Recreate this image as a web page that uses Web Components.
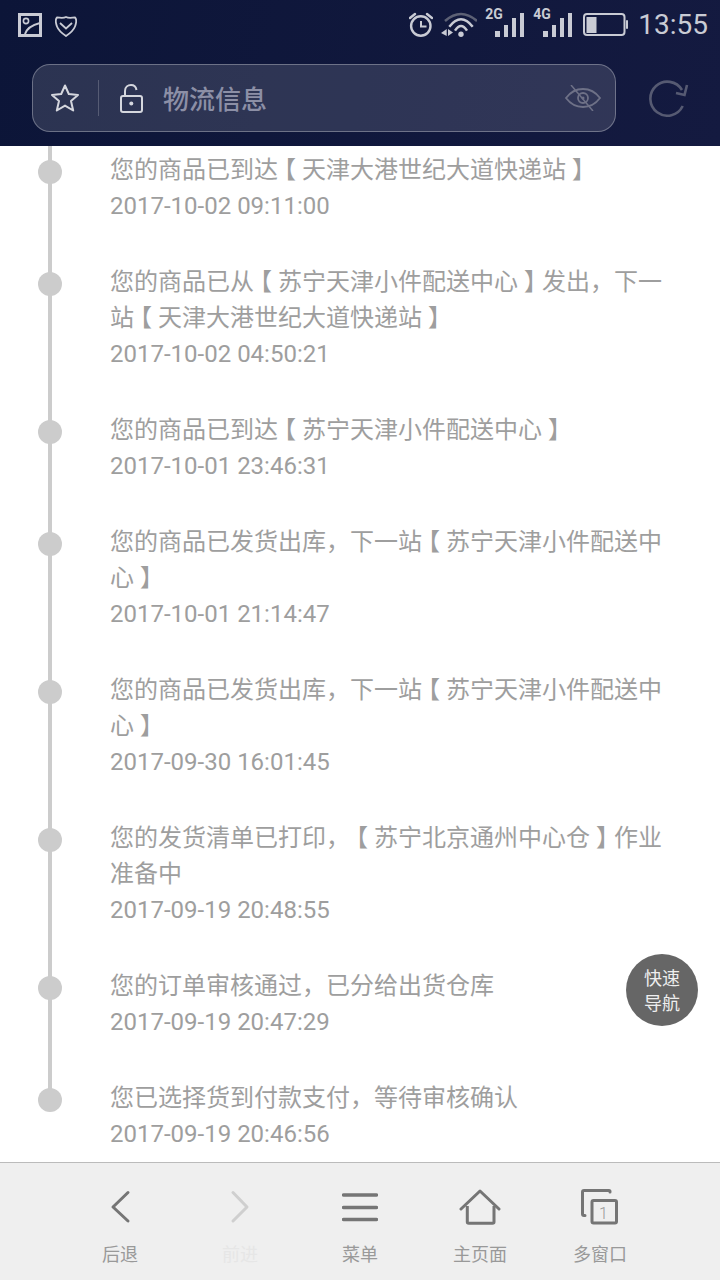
<!DOCTYPE html>
<html lang="zh-CN"><head><meta charset="utf-8">
<style>
html,body{margin:0;padding:0;height:1280px;overflow:hidden;background:#fff}
body{display:flex;flex-direction:column;font-family:"Noto Sans CJK SC",sans-serif;}
</style></head><body>
<app-header></app-header>
<track-list>
<track-item time="2017-10-02 09:11:00">您的商品已到达<l-k>【</l-k>天津大港世纪大道快递站<r-k>】</r-k></track-item>
<track-item time="2017-10-02 04:50:21">您的商品已从<l-k>【</l-k>苏宁天津小件配送中心<r-k>】</r-k>发出，下一<br>站<l-k>【</l-k>天津大港世纪大道快递站<r-k>】</r-k></track-item>
<track-item time="2017-10-01 23:46:31">您的商品已到达<l-k>【</l-k>苏宁天津小件配送中心<r-k>】</r-k></track-item>
<track-item time="2017-10-01 21:14:47">您的商品已发货出库，下一站<l-k>【</l-k>苏宁天津小件配送中<br>心<r-k>】</r-k></track-item>
<track-item time="2017-09-30 16:01:45">您的商品已发货出库，下一站<l-k>【</l-k>苏宁天津小件配送中<br>心<r-k>】</r-k></track-item>
<track-item time="2017-09-19 20:48:55">您的发货清单已打印，<l-k>【</l-k>苏宁北京通州中心仓<r-k>】</r-k>作业<br>准备中</track-item>
<track-item time="2017-09-19 20:47:29">您的订单审核通过，已分给出货仓库</track-item>
<track-item time="2017-09-19 20:46:56" last>您已选择货到付款支付，等待审核确认</track-item>
<quick-nav></quick-nav>
</track-list>
<bottom-bar></bottom-bar>
<script>
const def=(name,html,init)=>customElements.define(name,class extends HTMLElement{
  constructor(){super();this.attachShadow({mode:'open'}).innerHTML=html;}
  connectedCallback(){init&&init(this)}
});
const I=(w,h,vb,body,extra='')=>`<svg width="${w}" height="${h}" viewBox="${vb}" fill="none" ${extra}>${body}</svg>`;
const C='#c9cbd4';
const sig=`<rect x="0" y="18" width="5" height="6" fill="${C}"/><rect x="9" y="12" width="4" height="12" fill="${C}"/><rect x="17" y="5" width="4" height="19" fill="${C}"/><rect x="25" y="0" width="4" height="24" fill="${C}"/>`;
def('l-k',`<style>:host{display:inline-block;font-feature-settings:"halt";padding:0 6px}</style><slot></slot>`);
def('r-k',`<style>:host{display:inline-block;font-feature-settings:"halt";padding:0 6px}</style><slot></slot>`);
def('app-header',`<style>
:host{display:block;height:146px;flex:none;background:linear-gradient(100deg,#0c1538,#141a40);box-sizing:border-box;color:${C}}
svg{display:block}
.status{height:50px;display:flex;align-items:flex-start}
.left{display:flex;align-items:center;gap:13px;margin:13px 0 0 18px}
.right{display:flex;align-items:flex-start;margin-left:auto;margin-right:12px}
.time{font:28px/50px Roboto,sans-serif;color:${C};margin-left:10px}
.net{position:relative;width:39px;height:31px;margin-top:6px}
.net b{position:absolute;left:0;top:0;font:bold 14px/16px Roboto,sans-serif;color:${C}}
.net svg{position:absolute;right:0;bottom:0}
.bar{margin:14px 0 0 32px;display:flex;align-items:center}
.addr{width:584px;height:68px;box-sizing:border-box;border:1px solid rgba(255,255,255,.3);border-radius:18px;background:rgba(255,255,255,.13);display:flex;align-items:center;}
.title{font-size:26px;line-height:68px;color:#8c8fa6;font-weight:500;margin-left:19px}
.div{width:1px;height:36px;background:rgba(255,255,255,.2);margin:0 19px 0 18px}
</style>
<div class="status">
 <div class="left">
  ${I(24,24,'0 0 24 24',`<rect x="1.5" y="1.5" width="21" height="21" stroke="${C}" stroke-width="3"/><circle cx="8" cy="8" r="2.6" stroke="${C}" stroke-width="1.6"/><path d="M7 21C9 15 14 12 22 10" stroke="${C}" stroke-width="2"/>`)}
  ${I(22,22,'0 0 22 22',`<path d="M11 2C14 3.500 17 2.500 20 2.500C21.500 4 21.300 8 20 11.500C18.500 15.500 14 19 11 21C8 19 3.500 15.500 2 11.500C.7 8 .5 4 2 2.500C5 2.500 8 3.500 11 2Z" stroke="${C}" stroke-width="1.8" stroke-linejoin="round"/><path d="M5 8L11 13.500L17 8" stroke="${C}" stroke-width="1.800"/>`,'style="margin-top:1px"')}
 </div>
 <div class="right">
  ${I(24,26,'0 0 24 26',`<circle cx="11.800" cy="14" r="9.700" stroke="${C}" stroke-width="2.400"/><path d="M12 9V14.500H17.500" stroke="${C}" stroke-width="2"/><path d="M1 6L6 2M23 6L18 2" stroke="${C}" stroke-width="2.400" stroke-linecap="round"/>`,'style="margin:12px 8px 0 0"')}
  ${I(36,26,'0 0 36 26',`<path d="M4 9Q20 -5 36 9" stroke="#5d6175" stroke-width="2.500"/><path d="M8.300 14.700Q20 -.1 31.700 14.700" stroke="${C}" stroke-width="2.500"/><path d="M14 18.700Q20 9.300 26 18.700" stroke="${C}" stroke-width="2.500"/><circle cx="20" cy="22.300" r="2.700" fill="${C}"/><path d="M0 21L5.700 17V24ZM7 17L12 20.500L7 24Z" fill="${C}"/>`,'style="margin:12px 8px 0 0"')}
  <div class="net"><b>2G</b>${I(29,24,'0 0 29 24',sig)}</div>
  <div class="net" style="margin-left:9px"><b>4G</b>${I(29,24,'0 0 29 24',sig)}</div>
  ${I(45,24,'0 0 45 24',`<rect x="1" y="1" width="40.500" height="21" rx="3" stroke="${C}" stroke-width="2"/><rect x="3.500" y="4" width="10" height="16" fill="${C}"/><rect x="43" y="7" width="2" height="9" rx="1" fill="${C}"/>`,'style="margin:13px 0 0 11px"')}
  <span class="time">13:55</span>
 </div>
</div>
<div class="bar">
 <div class="addr">
  ${I(30,30,'0 0 30 30',`<path d="M15 2.500L18.800 11L28 12L21 18L23.200 27.500L15 22.600L6.800 27.500L9 18L2 12L11.200 11Z" stroke="#d5d7de" stroke-width="2" stroke-linejoin="round"/>`,'style="margin-left:17px"')}
  <div class="div"></div>
  ${I(26,30,'0 0 26 30',`<rect x="3" y="13" width="21" height="16" rx="2" stroke="#d5d7de" stroke-width="2"/><path d="M7 13V8C7 4 10 2 13 2C16 2 18 4 18.500 7" stroke="#d5d7de" stroke-width="2"/><circle cx="13.300" cy="20.500" r="2" fill="#d5d7de"/>`)}
  <span class="title">物流信息</span>
  ${I(36,26,'0 0 36 26',`<path d="M1 13C10 1 26 1 35 13C26 25 10 25 1 13Z" stroke="#6e7187" stroke-width="1.800"/><circle cx="18" cy="13" r="5" stroke="#6e7187" stroke-width="1.800"/><circle cx="18" cy="13" r="1.500" fill="#6e7187"/><path d="M6 0L28 26" stroke="#6e7187" stroke-width="1.500"/>`,'style="margin-left:auto;margin-right:14px"')}
 </div>
 ${I(40,38,'0 0 40 38',`<path d="M33 11A17 17 0 1 0 33.700 27" stroke="#565a72" stroke-width="2.600"/><path d="M38 6L35.500 16L27 14" stroke="#565a72" stroke-width="2.600"/>`,'style="margin-left:33px"')}
</div>`);
def('track-list',`<style>
:host{display:block;position:relative;flex:1;min-height:0;overflow:hidden;padding-top:6px;background:#fff}
</style><slot></slot>`);
def('track-item',`<style>
:host{display:flow-root;position:relative;padding:0 50px 40px 110px;color:#9e9e9e;font-size:24px;line-height:36px;text-spacing-trim:space-all}
.rail{position:absolute;left:48px;width:4px;top:-40px;bottom:0;background:#ccc}
:host([last]) .rail{bottom:auto;height:50px}
.dot{position:absolute;left:38px;top:8px;width:24px;height:24px;border-radius:50%;background:#ccc}
.m{margin:-2px 0 2px}
.t{font-family:Roboto,sans-serif}
</style><div class="rail"></div><div class="dot"></div><div class="m"><slot></slot></div><div class="t"></div>`,
 el=>{el.shadowRoot.querySelector('.t').textContent=el.getAttribute('time')});
def('quick-nav',`<style>
:host{position:absolute;left:626px;top:808px;width:72px;height:72px;border-radius:50%;background:#666;color:#eee;font-size:18px;line-height:25px;text-align:center;display:flex;align-items:center;justify-content:center}
</style><div>快速<br>导航</div>`);
def('bottom-item',`<style>
:host{display:flex;flex-direction:column;align-items:center;width:120px;color:#999;font-size:18px}
.ic{height:44px;display:flex;align-items:center;justify-content:center;margin-top:22px}
.l{line-height:26px;margin-top:11px}
:host([off]){color:#e6e6e6}
</style><div class="ic"><slot></slot></div><div class="l"></div>`,el=>{el.shadowRoot.querySelector('.l').textContent=el.getAttribute('label')});
def('bottom-bar',`<style>
:host{display:flex;justify-content:center;flex:none;height:118px;box-sizing:border-box;border-top:1px solid #bbb;background:#efefef}
text{font-family:Roboto,sans-serif;font-weight:300}
</style>
<bottom-item label="后退">${I(22,36,'0 0 22 36',`<path d="M19 3.500L4 18L19 32" stroke="#757575" stroke-width="3" stroke-linecap="round" stroke-linejoin="round"/>`)}</bottom-item>
<bottom-item label="前进" off>${I(22,36,'0 0 22 36',`<path d="M4 3.500L18 18L4 32" stroke="#cfcfcf" stroke-width="3" stroke-linecap="round" stroke-linejoin="round"/>`)}</bottom-item>
<bottom-item label="菜单">${I(36,32,'0 0 36 32',`<path d="M1.500 4H34.500M1.500 16.500H34.500M1.500 28.500H34.500" stroke="#757575" stroke-width="3.500" stroke-linecap="round"/>`)}</bottom-item>
<bottom-item label="主页面">${I(42,36,'0 0 42 36',`<path d="M2 20L21 2L40 20" stroke="#757575" stroke-width="3" stroke-linecap="round" stroke-linejoin="round"/><path d="M8.300 17V33C8.300 34 8.800 34.300 9.800 34.300H33.500C34.500 34.300 35 34 35 33V17" stroke="#757575" stroke-width="3"/>`)}</bottom-item>
<bottom-item label="多窗口">${I(38,36,'0 0 38 36',`<path d="M29 3V2.500C29 2 28.500 1.500 28 1.500H3C2 1.500 1.500 2 1.500 3V25C1.500 26 2 26.500 3 26.500H4" stroke="#757575" stroke-width="3" stroke-linecap="round"/><rect x="11" y="11.500" width="24.500" height="22.500" rx="1.500" stroke="#757575" stroke-width="3"/><text x="22.500" y="30" font-size="16" fill="#999" text-anchor="middle">1</text>`)}</bottom-item>`);
</script>
</body></html>
